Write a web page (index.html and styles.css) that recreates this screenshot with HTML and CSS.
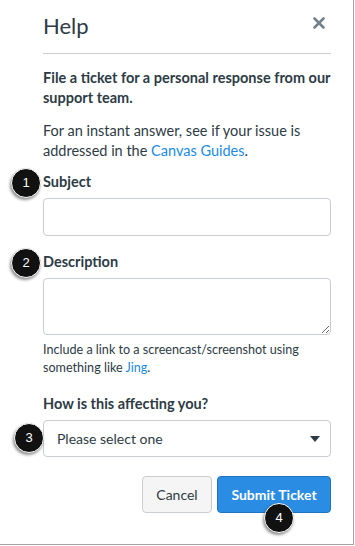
FILE: index.html
```html
<!DOCTYPE html>
<html lang="en">
<head>
  <meta charset="UTF-8">
  <meta name="viewport" content="width=device-width, initial-scale=1.0">
  <title>Help</title>
  <link rel="stylesheet" href="styles.css">
</head>
<body>
  <div class="panel">
    <header class="dialog-head">
      <h1>Help</h1>
      <button class="close" aria-label="Close">
        <svg width="12" height="12" viewBox="0 0 12 12"><path d="M1.5 1.5 L10.5 10.5 M10.5 1.5 L1.5 10.5" stroke="#73818c" stroke-width="2.6" stroke-linecap="round"/></svg>
      </button>
    </header>

    <div class="dialog-body">
      <p class="lead">File a ticket for a personal response from our support team.</p>
      <p class="intro">For an instant answer, see if your issue is addressed in the <a href="#">Canvas Guides</a>.</p>

      <div class="field">
        <span class="badge badge-label">1</span>
        <label for="subject">Subject</label>
        <input type="text" id="subject">
      </div>

      <div class="field field-desc">
        <span class="badge badge-label">2</span>
        <label for="description">Description</label>
        <textarea id="description"></textarea>
        <p class="hint">Include a link to a screencast/screenshot using<br>something like <a href="#">Jing</a>.</p>
      </div>

      <div class="field field-select">
        <label for="severity">How is this affecting you?</label>
        <div class="select-wrap">
          <span class="badge badge-select">3</span>
          <div class="select" id="severity">
            <span>Please select one</span>
            <svg width="10" height="6" viewBox="0 0 10 6"><path d="M0 0 H10 L5 6 Z" fill="#2d3b45"/></svg>
          </div>
        </div>
      </div>

      <div class="actions">
        <button class="btn btn-cancel">Cancel</button>
        <button class="btn btn-primary">Submit Ticket<span class="badge badge-submit">4</span></button>
      </div>
    </div>
  </div>
</body>
</html>
```

FILE: styles.css
```css
body {
  margin: 0;
  padding: 0;
  background-color: #ffffff;
  font-family: Lato, "Open Sans", sans-serif;
  color: #2d3b45;
}

.panel {
  width: 288px;
  height: 544px;
  padding: 0 22px 0 43px;
  border-right: 1px solid #a5a5a5;
  border-bottom: 1px solid #a5a5a5;
  position: relative;
}

.dialog-head {
  display: flex;
  justify-content: space-between;
  align-items: flex-start;
  padding: 12px 0 13px;
  border-bottom: 1px solid #c7cdd1;
}

.dialog-head h1 {
  margin: 0;
  font-size: 22px;
  line-height: 28px;
  font-weight: 400;
}

.close {
  background: none;
  border: none;
  padding: 0;
  margin: 5px 6px 0 0;
  width: 12px;
  height: 12px;
  display: flex;
}

.dialog-body {
  padding-top: 14px;
}

p {
  margin: 0;
  font-size: 14.5px;
  line-height: 20px;
}

.lead {
  font-weight: 700;
}

.intro {
  margin-top: 13px;
}

a {
  color: #1a8ae5;
  text-decoration: none;
}

.field {
  position: relative;
  margin-top: 11px;
}

.field-desc {
  margin-top: 16px;
}

.field-select {
  margin-top: 17px;
}

label {
  display: block;
  font-size: 14.5px;
  line-height: 20px;
  font-weight: 700;
  margin-bottom: 6px;
}

input,
textarea,
.select {
  display: block;
  box-sizing: border-box;
  width: 288px;
  border: 1px solid #c7cdd1;
  border-radius: 4px;
  background: #ffffff;
  margin: 0;
}

input {
  height: 38px;
}

textarea {
  height: 57px;
  resize: vertical;
}

.hint {
  margin-top: 6px;
  font-size: 12.6px;
  line-height: 18px;
}

.select-wrap {
  position: relative;
}

.select {
  height: 37px;
  display: flex;
  align-items: center;
  justify-content: space-between;
  padding: 0 10px 0 13px;
  font-size: 14px;
}

.actions {
  display: flex;
  justify-content: flex-end;
  gap: 5px;
  margin-top: 19px;
}

.btn {
  position: relative;
  height: 37px;
  padding: 0;
  border: 1px solid #c7cdd1;
  border-radius: 4px;
  background-color: #f5f5f5;
  color: #2d3b45;
  font-family: Lato, "Open Sans", sans-serif;
  font-size: 14px;
  white-space: nowrap;
}

.btn-cancel {
  width: 70px;
}

.btn-primary {
  width: 114px;
  background-color: #2b8ce3;
  border-color: #1f72bf;
  color: #ffffff;
  font-weight: 700;
}

.badge {
  position: absolute;
  width: 28px;
  height: 28px;
  border-radius: 50%;
  background-color: #111111;
  border: 1px solid #ffffff;
  box-shadow: -1px 2px 3px rgba(0, 0, 0, 0.45);
  color: #ffffff;
  font-family: "Liberation Sans", Arial, sans-serif;
  font-size: 13px;
  font-weight: 400;
  line-height: 28px;
  text-align: center;
}

.badge-label {
  left: -32px;
  top: -4px;
}

.badge-select {
  left: -29px;
  top: 3px;
}

.badge-submit {
  left: 46px;
  top: 26px;
}
```
